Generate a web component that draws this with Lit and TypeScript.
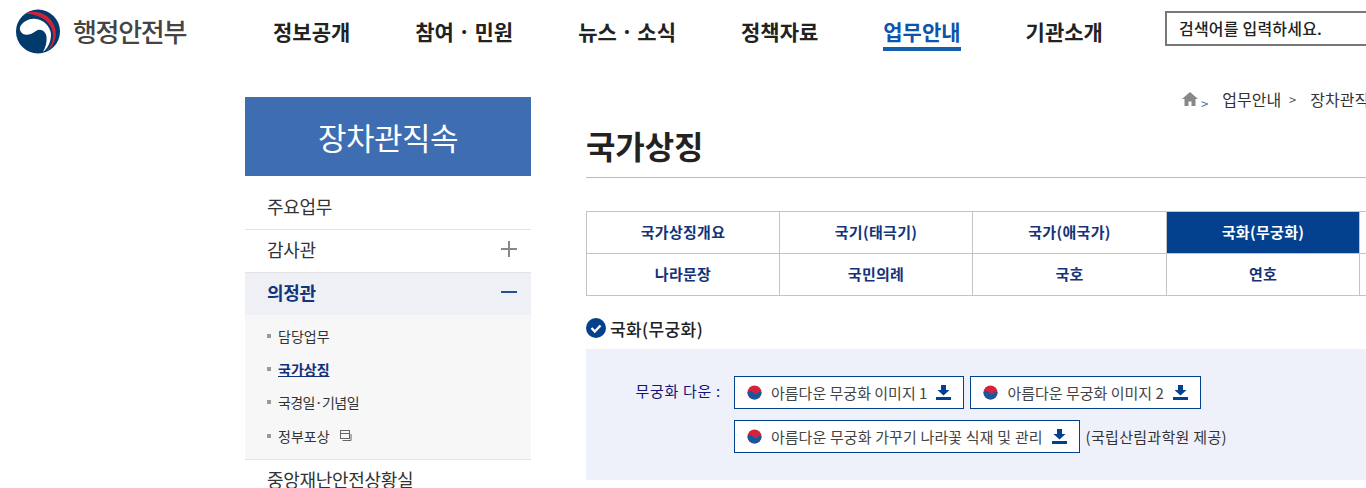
import { LitElement, html, css, svg } from 'lit';
import { customElement } from 'lit/decorators.js';

const NAV = ['정보공개', '참여 · 민원', '뉴스 · 소식', '정책자료', '업무안내', '기관소개'];
const TABS = ['국가상징개요', '국기(태극기)', '국가(애국가)', '국화(무궁화)', '', '나라문장', '국민의례', '국호', '연호', ''];

const logo = svg`<svg class="logo" viewBox="0 0 46 45" width="46" height="45">
  <circle cx="23" cy="22.500" r="22" fill="#013a6b"/>
  <path d="M9 5A22 22 0 0 1 31 43C38 36 40 26 36 18C31 9 19 4 9 5Z" fill="#d0213f"/>
  <path d="M5 18C8 12 15 9 21 10C29 11 35 17 36 25C36 33 33 39 28 43C31 38 32 32 31.500 28C31 22 25 19 21 22C17 25 12 27 8 25C5 23 4.500 20 5 18Z" fill="#fff"/>
</svg>`;

const taegeuk = svg`<svg class="flag" viewBox="0 0 16 16" width="15" height="15">
  <circle cx="8" cy="8" r="7.500" fill="#d8213f"/>
  <path d="M.5 8C2 6 5 6 6.500 8S10 10.500 11 9 13 6.500 15.500 8A7.500 7.500 0 0 1 .5 8Z" fill="#17589c"/>
</svg>`;

const download = svg`<svg class="dl" viewBox="0 0 15 15" width="15" height="15">
  <path d="M5 0H10V5H13.500L7.500 10.500 1.500 5H5Z" fill="#03418e"/>
  <rect x="0" y="12" width="15" height="3" fill="#03418e"/>
</svg>`;

@customElement('app-root')
export class AppRoot extends LitElement {
  static styles = css`
    :host {
      display: block;
      width: 1366px;
      height: 488px;
      overflow: hidden;
      background: #fff;
      color: #222;
      font-family: 'Noto Sans CJK KR', 'Noto Sans', sans-serif;
    }
    a { color: inherit; text-decoration: none; }

    .top {
      display: flex;
      height: 97px;
      box-sizing: border-box;
      padding-left: 15px;
    }
    .brand {
      flex: none;
      display: flex;
      align-items: flex-start;
      gap: 12px;
      width: 258px;
      padding-top: 9px;
      font-size: 26px;
      font-weight: 500;
      line-height: 44px;
      letter-spacing: -1.3px;
      color: #444;
    }
    .logo { flex: none; }
    .nav {
      flex: none;
      display: flex;
      gap: 65px;
      width: 892px;
      padding-top: 16px;
      font-size: 21px;
      font-weight: 700;
      line-height: 30px;
      word-spacing: -.7px;
    }
    .nav a { height: 35px; white-space: nowrap; box-sizing: border-box; }
    .nav a.on { color: #0d54aa; border-bottom: 4px solid #145ead; }
    .search {
      flex: none;
      width: 260px;
      height: 35px;
      margin-top: 11px;
      padding-left: 12px;
      box-sizing: border-box;
      border: 2px solid #777;
      font-size: 16px;
      font-weight: 500;
      line-height: 31px;
      letter-spacing: .2px;
      color: #222;
    }

    .body { display: flex; padding-left: 245px; }
    .side { flex: none; width: 286px; margin-right: 55px; }
    .side h2 {
      margin: 0;
      height: 79px;
      background: #3f6db1;
      color: #fff;
      font-size: 31px;
      font-weight: 400;
      line-height: 79px;
      text-align: center;
      letter-spacing: -.5px;
    }
    .item {
      display: flex;
      justify-content: space-between;
      align-items: center;
      height: 38px;
      padding: 0 14px 4px 22px;
      border-bottom: 1px solid #e3e3e3;
      font-size: 18px;
      color: #333;
      letter-spacing: -.3px;
    }
    .item.first { height: 40px; padding-top: 10px; padding-bottom: 3px; }
    .item.open {
      border-bottom: 0;
      background: #eef0f5;
      color: #13337a;
      font-weight: 700;
    }
    .plus, .minus { position: relative; width: 16px; height: 16px; }
    .plus::before, .minus::before {
      content: '';
      position: absolute;
      left: 0;
      top: 7px;
      width: 16px;
      height: 2px;
      background: #888;
    }
    .minus::before { background: #22528f; }
    .plus::after {
      content: '';
      position: absolute;
      left: 7px;
      top: 0;
      width: 2px;
      height: 16px;
      background: #888;
    }
    .sub {
      margin: 0;
      padding: 4px 0 7px 22px;
      list-style: none;
      background: #f7f7f7;
      border-bottom: 1px solid #e3e3e3;
      font-size: 14px;
      color: #333;
    }
    .sub li { display: flex; align-items: center; height: 33.300px; gap: 7px; }
    .sub li::before { content: ''; width: 4px; height: 4px; background: #999; }
    .sub a.on { color: #10307c; font-weight: 700; text-decoration: underline; }
    .sub a.tight { letter-spacing: -.6px; }
    .newwin { margin-left: 2px; }

    .main { flex: none; width: 780px; }
    .crumb {
      display: flex;
      align-items: center;
      height: 4px;
      padding: 0 0 0 596px;
      margin-bottom: 27px;
      white-space: nowrap;
      font-size: 16px;
      color: #333;
    }
    .crumb svg { flex: none; }
    .crumb i { font-style: normal; font-size: 13px; margin: 0 14px 0 8px; color: #555; }
    .crumb i.first { margin: 8px 14px 0 3px; color: #4a6a9a; }
    h1 {
      margin: 0 0 33px;
      height: 49px;
      border-bottom: 1px solid #bbb;
      font-size: 32px;
      font-weight: 700;
      line-height: 34px;
      letter-spacing: -.1px;
    }
    .tabs {
      display: grid;
      grid-template-columns: 193px 193px 194px 193px 193px;
      border-top: 1px solid #c4c4c4;
      border-left: 1px solid #c4c4c4;
      margin-bottom: 20px;
    }
    .tabs a {
      height: 41px;
      border-right: 1px solid #c4c4c4;
      border-bottom: 1px solid #c4c4c4;
      font-size: 15px;
      font-weight: 700;
      line-height: 39px;
      text-align: center;
      letter-spacing: .3px;
      color: #13337a;
    }
    .tabs a.on { background: #03418e; color: #fff; }
    h3 {
      display: flex;
      align-items: center;
      gap: 4px;
      margin: 0 0 9px;
      height: 24px;
      font-size: 17px;
      font-weight: 500;
      letter-spacing: .4px;
      color: #222;
    }
    .panel {
      display: grid;
      grid-template-columns: 148px auto;
      align-content: start;
      height: 131px;
      padding-top: 27px;
      box-sizing: border-box;
      background: #eef1f9;
      font-size: 15px;
    }
    .label { padding-top: 4px; text-align: right; padding-right: 13px; color: #13137a; letter-spacing: .7px; }
    .rows { display: flex; flex-direction: column; gap: 11px; }
    .row { display: flex; align-items: center; gap: 6px; }
    .btn {
      display: flex;
      align-items: center;
      height: 33px;
      padding: 0 12px;
      box-sizing: border-box;
      border: 1px solid #03418e;
      background: #fff;
      color: #444;
      white-space: nowrap;
    }
    .btn.long { word-spacing: .5px; }
    .flag { margin-right: 9px; }
    .dl { margin-left: 9px; }
    .note { color: #333; letter-spacing: .3px; }
  `;

  render() {
    return html`
      <div class="top">
        <div class="brand">${logo}<span>행정안전부</span></div>
        <nav class="nav">
          ${NAV.map((n) => html`<a href="#" class=${n === '업무안내' ? 'on' : ''}>${n}</a>`)}
        </nav>
        <div class="search">검색어를 입력하세요.</div>
      </div>
      <div class="body">
        <aside class="side">
          <h2>장차관직속</h2>
          <div class="item first">주요업무</div>
          <div class="item">감사관<span class="plus"></span></div>
          <div class="item open">의정관<span class="minus"></span></div>
          <ul class="sub">
            <li><a href="#">담당업무</a></li>
            <li><a href="#" class="on">국가상징</a></li>
            <li><a href="#" class="tight">국경일·기념일</a></li>
            <li>
              <a href="#">정부포상</a>
              <svg class="newwin" viewBox="0 0 13 13" width="13" height="13" fill="none" stroke="#666">
                <rect x="1.500" y="1.500" width="9" height="8"/><path d="M1.500 4.500H10.500M3.500 11.500H12V5"/>
              </svg>
            </li>
          </ul>
          <div class="item">중앙재난안전상황실</div>
        </aside>
        <section class="main">
          <div class="crumb">
            <svg viewBox="0 0 16 14" width="16" height="14"><path d="M8 0L16 7H13.500V14H9.500V9.500H6.500V14H2.500V7H0Z" fill="#888"/></svg>
            <i class="first">&gt;</i>업무안내<i>&gt;</i>장차관직속
          </div>
          <h1>국가상징</h1>
          <div class="tabs">
            ${TABS.map((t) => html`<a href="#" class=${t === '국화(무궁화)' ? 'on' : ''}>${t}</a>`)}
          </div>
          <h3>
            <svg viewBox="0 0 20 20" width="20" height="20">
              <circle cx="10" cy="10" r="10" fill="#03418e"/>
              <path d="M5.500 10L8.800 13.500 14.500 7.500" fill="none" stroke="#fff" stroke-width="2.400"/>
            </svg>
            국화(무궁화)
          </h3>
          <div class="panel">
            <div class="label">무궁화 다운 :</div>
            <div class="rows">
              <div class="row">
                <a href="#" class="btn">${taegeuk}아름다운 무궁화 이미지 1${download}</a>
                <a href="#" class="btn">${taegeuk}아름다운 무궁화 이미지 2${download}</a>
              </div>
              <div class="row">
                <a href="#" class="btn long">${taegeuk}아름다운 무궁화 가꾸기 나라꽃 식재 및 관리${download}</a>
                <span class="note">(국립산림과학원 제공)</span>
              </div>
            </div>
          </div>
        </section>
      </div>
    `;
  }
}
